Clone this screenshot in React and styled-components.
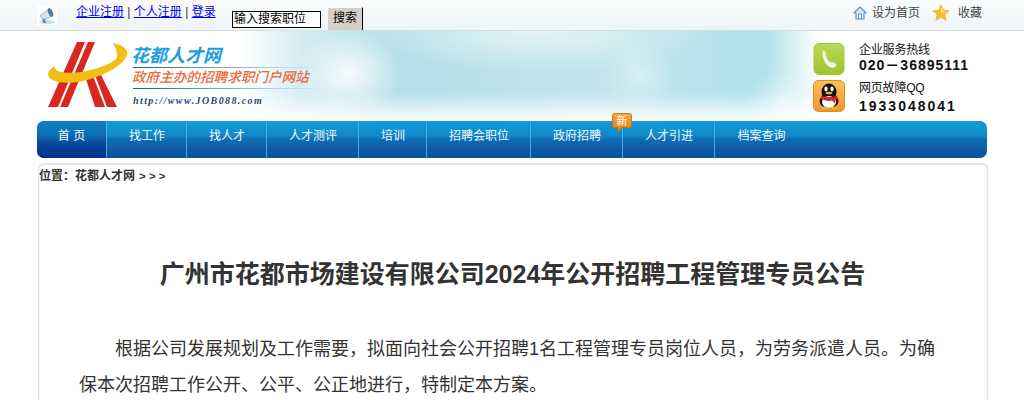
import React from "react";
import styled, { createGlobalStyle } from "styled-components";

const Global = createGlobalStyle`
  html, body { margin: 0; padding: 0; background: #fff; overflow: hidden; }
  body { font-family: "Liberation Sans", "Noto Sans CJK SC", sans-serif; font-size: 12px; color: #333; }
  * { box-sizing: border-box; }
`;
const Page = styled.div`width: 1024px; height: 400px; overflow: hidden;`;
const TopBar = styled.div`
  height: 31px; border-bottom: 1px solid #d6dde1;
  background: linear-gradient(#fafcfc, #eef4f7);
  display: flex; justify-content: center;
`;
const TopInner = styled.div`width: 950px; display: flex; align-items: flex-start;`;
const Speaker = styled.svg`width: 20px; height: 20px; margin-top: 5px; background: #fff; flex: none;`;
const Links = styled.div`
  margin: 5px 0 0 19px; width: 156px; font-size: 12px; line-height: 14px; color: #333; white-space: nowrap; flex: none;
  a { color: #0000ee; text-decoration: underline; }
`;
const SearchInput = styled.div`
  width: 89px; height: 17px; margin-top: 11px; border: 1px solid #000; background: #fff; color: #000;
  font-size: 12px; line-height: 14px; padding-left: 1px; white-space: nowrap; overflow: hidden; flex: none;
`;
const SearchButton = styled.div`
  width: 35px; height: 23px; margin: 7px 0 0 7px; background: #d4d0c8; border-right: 1px solid #000; border-top: 1px solid #fff;
  color: #000; font-size: 12px; line-height: 20px; text-align: center; flex: none;
`;
const TopRight = styled.div`
  margin-left: auto; margin-right: 5px; margin-top: 4px; display: flex; align-items: center; color: #444; font-size: 12px; line-height: 18px;
`;
const TopIcon = styled.svg`flex: none; display: block; margin-right: ${p => p.$gap}px;`;
const TopLabel = styled.span`margin-right: ${p => p.$gap || 0}px;`;

const Banner = styled.div`
  width: 950px; height: 90px; margin: 0 auto; display: flex; align-items: flex-start; justify-content: space-between;
  background:
    linear-gradient(rgba(255,255,255,0) 68%, rgba(255,255,255,.95) 100%),
    radial-gradient(ellipse 52px 42px at 312px 42px, rgba(255,255,255,.85), rgba(255,255,255,0) 100%),
    radial-gradient(ellipse 36px 36px at 603px 44px, rgba(255,255,255,.4), rgba(255,255,255,0) 100%),
    radial-gradient(ellipse 36px 34px at 745px 72px, rgba(255,255,255,.5), rgba(255,255,255,0) 100%),
    radial-gradient(ellipse 170px 42px at 500px 0, rgba(255,255,255,.6), rgba(255,255,255,0) 100%),
    linear-gradient(90deg, #fff 0, #fff 205px, #d5edf3 263px, #bfe3ec 325px, #b5e0ea 365px, #c2e5ed 560px, #b3e2ec 730px, #d8f0f5 756px, #fff 782px, #fff 100%);
`;
const Logo = styled.div`display: flex; align-items: flex-start; margin: 11px 0 0 11px;`;
const LogoMark = styled.svg`width: 80px; height: 70px; flex: none; display: block;`;
const LogoText = styled.div`margin: 3px 0 0 5px; width: 190px; font-style: italic;`;
const LogoName = styled.div`font-size: 18px; line-height: 22px; font-weight: 700; color: #1f9ce0; margin-left: -2px;`;
const LogoRule = styled.div`height: 1px; background: linear-gradient(90deg, #0d6a80, #a0d0dc 70%, transparent);`;
const LogoSlogan = styled.div`font-size: 13.6px; line-height: 20px; font-weight: 500; color: #e8693a; white-space: nowrap; margin-left: -1px;`;
const LogoUrl = styled.div`
  font-family: "Liberation Serif", serif; font-weight: 700; font-size: 10px; line-height: 14px; letter-spacing: 1.4px; color: #2a4a7a; margin-top: 5px; white-space: nowrap;
`;
const Contact = styled.div`width: 174px; margin-top: 12px; display: grid; grid-template-columns: 32px 1fr; column-gap: 14px; row-gap: 5px;`;
const ContactIcon = styled.svg`width: 32px; height: 32px; display: block;`;
const ContactBody = styled.div`color: #111; padding-top: ${p => p.$top || 0}px;`;
const ContactLabel = styled.div`font-size: 12px; line-height: 14px; letter-spacing: -.2px;`;
const ContactNumber = styled.div`
  font-size: 14px; line-height: 15px; font-weight: 700; letter-spacing: ${p => p.$spacing}px; white-space: nowrap; margin-top: ${p => p.$gap}px;
`;

const Nav = styled.div`
  width: 950px; height: 37px; margin: 0 auto; border-radius: 7px; display: flex; overflow: visible;
  background: linear-gradient(#149bd8 0, #1188c8 40%, #0d6cb4 50%, #0d4f9a 100%);
`;
const NavItem = styled.div`
  position: relative; width: ${p => p.$w}px; line-height: 30px; text-align: center; color: #f2f8fc; font-size: 12px; white-space: nowrap;
  padding-left: ${p => p.$active ? 0 : 2}px;
  border-radius: ${p => p.$active ? "7px 0 0 7px" : "0"};
  background: ${p => p.$active ? "linear-gradient(#0e80c4 0, #0d6cb4 40%, #08479a 60%, #033090 100%)" : "none"};
  ${p => !p.$last && `box-shadow: 1px 0 0 0 rgba(90,190,240,.75);`}
`;
const Badge = styled.svg`position: absolute; right: -10px; top: -8px; width: 20px; height: 20px;`;

const Box = styled.div`
  width: 951px; height: 300px; margin: 5px auto 0; transform: translateX(.5px); border: 2px solid #e6e6e6; border-bottom: 0; border-radius: 6px 6px 0 0; background: #fff;
`;
const Crumb = styled.div`
  font-size: 12px; line-height: 14px; font-weight: 700; color: #333; padding: 4px 0 0 0;
  span { margin-left: 4px; font-weight: 700; font-size: 11.5px; }
`;
const Title = styled.h1`
  margin: 75px 0 0; font-size: 25px; line-height: 32px; font-weight: 700; color: #333; text-align: center;
`;
const Para = styled.p`
  margin: 41px 40px 0 40px; font-size: 18px; line-height: 36px; color: #333; text-indent: 36px;
`;

const Home = () => (
  <TopIcon $gap={5} width="14" height="14" viewBox="0 0 14 14">
    <path d="M7 1 1 7h2v6h8V7h2z" fill="#d6e8f6" stroke="#5f95c4" strokeWidth="1.2" strokeLinejoin="round" />
    <rect x="5.6" y="8" width="2.8" height="5" fill="#fff" stroke="#5f95c4" />
  </TopIcon>
);
const Star = () => (
  <TopIcon $gap={8} width="18" height="18" viewBox="0 0 20 20">
    <path d="M10 1l2.7 6 6.3.6-4.8 4.2 1.5 6.4L10 14.8 4.3 18.2l1.5-6.4L1 7.6 7.3 7z" fill="#f6c22c" stroke="#e6a518" strokeWidth=".7" />
    <path d="M10 2.5l2 5 5 .5-5 1-2 1.5z" fill="#fde98a" />
  </TopIcon>
);

const navs = [
  ["首 页", 69, true], ["找工作", 80], ["找人才", 80], ["人才测评", 92], ["培训", 68],
  ["招聘会职位", 104], ["政府招聘", 92], ["人才引进", 92], ["档案查询", 93],
];

export default function App() {
  return (
    <Page>
      <Global />
      <TopBar>
        <TopInner>
          <Speaker viewBox="0 0 20 20">
            <ellipse cx="10" cy="17" rx="8" ry="2" fill="#bfe3ec" />
            <path d="M3 11l9-7 3 7-8 4z" fill="#d9e2ea" stroke="#8aa0b5" strokeWidth=".7" />
            <ellipse cx="13.5" cy="7.5" rx="2.3" ry="4.6" transform="rotate(-22 13.5 7.5)" fill="#4f7f9e" />
            <path d="M5 14.5l1.5 3.5h2.5L8 13.5z" fill="#6e8aa6" />
          </Speaker>
          <Links><a>企业注册</a> | <a>个人注册</a> | <a>登录</a></Links>
          <SearchInput>输入搜索职位</SearchInput>
          <SearchButton>搜索</SearchButton>
          <TopRight>
            <Home /><TopLabel $gap={12}>设为首页</TopLabel>
            <Star /><TopLabel>收藏</TopLabel>
          </TopRight>
        </TopInner>
      </TopBar>
      <Banner>
        <Logo>
          <LogoMark viewBox="0 0 80 70">
            <path d="M29 0h8L10 65H0z" fill="#d8281f" />
            <path d="M40 0h7L20 65h-8z" fill="#d8281f" />
            <path d="M38 37l7-3 12 31H47z" fill="#d8281f" />
            <path d="M47 33l5-2 17 34H59z" fill="#d8281f" />
            <path d="M65 1C75 3 81 8 79 13 76 24 50 37 30 40 15 42 2 40 0 33 0 29 3 26 7 24 5 30 18 32 33 30 50 27 72 20 69 12 68 8 67 4 65 1z" fill="#f3bd12" />
          </LogoMark>
          <LogoText>
            <LogoName>花都人才网</LogoName>
            <LogoRule />
            <LogoSlogan>政府主办的招聘求职门户网站</LogoSlogan>
            <LogoRule />
            <LogoUrl>http://www.JOB088.com</LogoUrl>
          </LogoText>
        </Logo>
        <Contact>
          <ContactIcon viewBox="0 0 32 32">
            <defs>
              <linearGradient id="ph" x1="0" y1="0" x2="0" y2="1">
                <stop offset="0" stopColor="#bcd95a" /><stop offset="1" stopColor="#9cc42a" />
              </linearGradient>
            </defs>
            <rect x="1" y=".5" width="30" height="31" rx="5" fill="url(#ph)" stroke="#a3c838" />
            <path d="M10 8c1.500-2 3.500 3 2.800 5 1 2.800 3 5.500 5.500 6.500 2-.5 3.500-.5 5 2 1 2-3 4-5.500 3C13 23 8 14 10 8z" fill="#f4f8e4" />
          </ContactIcon>
          <ContactBody>
            <ContactLabel>企业服务热线</ContactLabel>
            <ContactNumber $spacing={1} $gap={1}>020－36895111</ContactNumber>
          </ContactBody>
          <ContactIcon viewBox="0 0 32 32">
            <defs>
              <linearGradient id="qq" x1="0" y1="0" x2="0" y2="1">
                <stop offset="0" stopColor="#f9c25a" /><stop offset="1" stopColor="#ef9432" />
              </linearGradient>
            </defs>
            <rect x=".5" y=".5" width="31" height="31" rx="5" fill="url(#qq)" stroke="#e08a20" />
            <ellipse cx="16" cy="12" rx="7.500" ry="8.500" fill="#111" />
            <ellipse cx="16" cy="21" rx="9.500" ry="7" fill="#111" />
            <ellipse cx="16" cy="22" rx="7" ry="6" fill="#fff" />
            <ellipse cx="13" cy="9" rx="1.700" ry="2.400" fill="#fff" />
            <ellipse cx="19" cy="9" rx="1.700" ry="2.400" fill="#fff" />
            <ellipse cx="16" cy="13" rx="3.500" ry="1.300" fill="#f5b21a" />
            <path d="M8 15.500c5 2 11 2 16 0l1 3c-1 1-3 1-3 1v4l-3-3c-4 1-8 0-11-2z" fill="#d8281f" />
            <ellipse cx="11.500" cy="28" rx="3.500" ry="1.300" fill="#f5b21a" />
            <ellipse cx="20.500" cy="28" rx="3.500" ry="1.300" fill="#f5b21a" />
          </ContactIcon>
          <ContactBody $top={1}>
            <ContactLabel>网页故障QQ</ContactLabel>
            <ContactNumber $spacing={2} $gap={4}>1933048041</ContactNumber>
          </ContactBody>
        </Contact>
      </Banner>
      <Nav>
        {navs.map(([t, w, active], i) => (
          <NavItem key={t} $w={w} $active={active} $last={i === navs.length - 1}>
            {t}
            {t === "政府招聘" && (
              <Badge viewBox="0 0 20 20">
                <defs>
                  <linearGradient id="bd" x1="0" y1="0" x2="0" y2="1">
                    <stop offset="0" stopColor="#f9a63a" /><stop offset="1" stopColor="#ea7a14" />
                  </linearGradient>
                </defs>
                <path d="M2.500 .5h15a2 2 0 0 1 2 2v10a2 2 0 0 1-2 2H10l-4 4.500v-4.500H2.500a2 2 0 0 1-2-2v-10a2 2 0 0 1 2-2z" fill="url(#bd)" stroke="#c9660f" strokeWidth=".8" />
                <text x="10" y="12" textAnchor="middle" fontSize="11" fill="#fff" fontFamily="Noto Sans CJK SC">新</text>
              </Badge>
            )}
          </NavItem>
        ))}
      </Nav>
      <Box>
        <Crumb>位置：花都人才网<span>&gt; &gt; &gt;</span></Crumb>
        <Title>广州市花都市场建设有限公司2024年公开招聘工程管理专员公告</Title>
        <Para>根据公司发展规划及工作需要，拟面向社会公开招聘1名工程管理专员岗位人员，为劳务派遣人员。为确保本次招聘工作公开、公平、公正地进行，特制定本方案。</Para>
      </Box>
    </Page>
  );
}
